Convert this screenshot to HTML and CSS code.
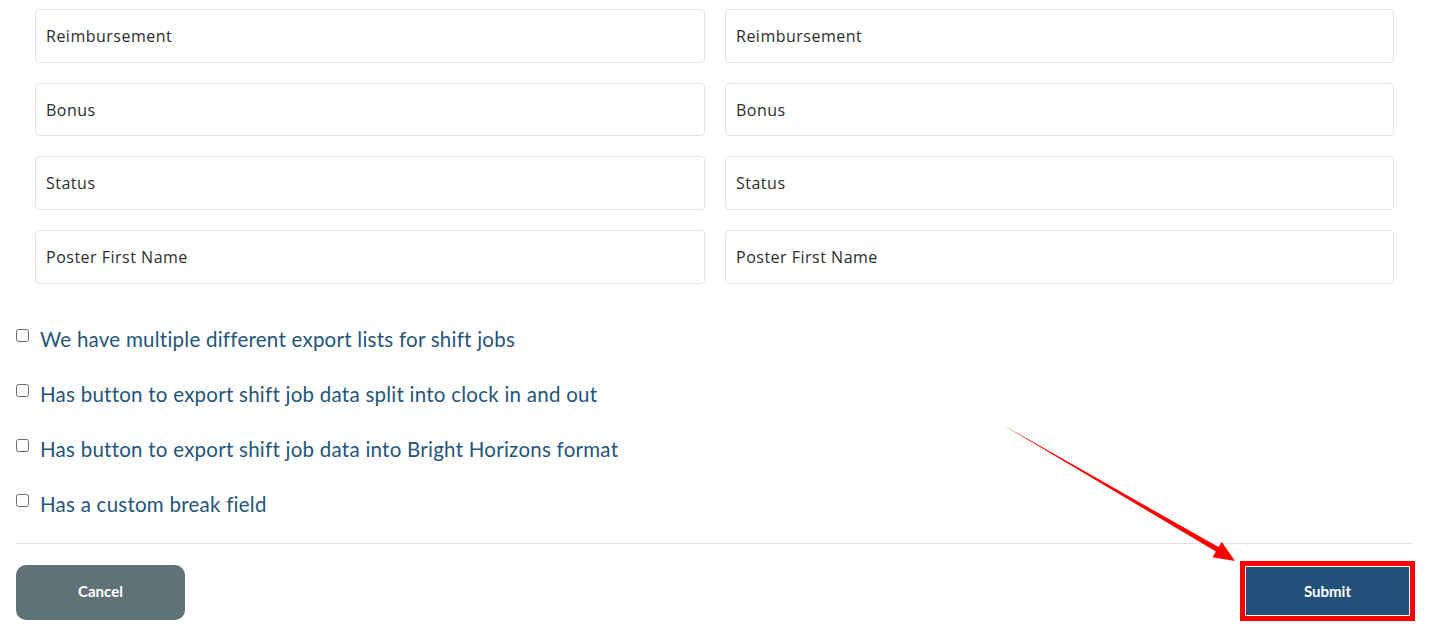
FILE: index.html
```html
<!DOCTYPE html>
<html>
<head>
<meta charset="utf-8">
<link rel="stylesheet" href="styles.css">
</head>
<body>
<div class="page">
  <div class="fields">
    <div class="field">Reimbursement</div>
    <div class="field">Reimbursement</div>
    <div class="field">Bonus</div>
    <div class="field">Bonus</div>
    <div class="field">Status</div>
    <div class="field">Status</div>
    <div class="field">Poster First Name</div>
    <div class="field">Poster First Name</div>
  </div>
  <div class="checks">
    <label class="check"><span class="box"></span>We have multiple different export lists for shift jobs</label>
    <label class="check"><span class="box"></span>Has button to export shift job data split into clock in and out</label>
    <label class="check"><span class="box"></span>Has button to export shift job data into Bright Horizons format</label>
    <label class="check"><span class="box"></span>Has a custom break field</label>
  </div>
  <div class="rule"></div>
  <div class="actions">
    <button class="btn cancel">Cancel</button>
    <div class="highlight"><button class="btn submit">Submit</button></div>
  </div>
</div>
<svg class="arrow" width="1436" height="636" viewBox="0 0 1436 636">
  <polygon fill="#ff0000" points="1003,425 1220.2,548.1 1217.6,552.5"/>
  <polygon fill="#ff0000" points="1235,561 1212.5,557.2 1221.7,541.7"/>
</svg>
</body>
</html>
```
FILE: styles.css
```css
html, body {
  margin: 0;
  padding: 0;
  background: #ffffff;
}
.page {
  width: 1397px;
  margin-left: 16px;
  padding-top: 9px;
}
.fields {
  display: grid;
  grid-template-columns: 670px 669px;
  column-gap: 20px;
  row-gap: 20px;
  padding: 0 19px;
}
.field {
  height: 51.7px;
  border: 1px solid #e3e3e3;
  border-radius: 4px;
  display: flex;
  align-items: center;
  padding-left: 10px;
  font-family: "Open Sans", "Noto Sans", sans-serif;
  font-size: 16px;
  letter-spacing: 0.5px;
  color: #2d2d2d;
  box-sizing: content-box;
}
.checks {
  display: flex;
  flex-direction: column;
  gap: 27px;
  margin-top: 41px;
}
.check {
  display: flex;
  align-items: center;
  height: 28px;
  font-family: "Lato", "Noto Sans", sans-serif;
  font-size: 20.5px;
  letter-spacing: 0.25px;
  color: #24557a;
}
.box {
  width: 11px;
  height: 11px;
  border: 1.5px solid #6b6b6b;
  border-radius: 2.5px;
  margin-right: 11px;
  margin-top: -6px;
  flex: none;
}
.rule {
  height: 1px;
  background: #e2e2e2;
  margin-top: 25px;
}
.actions {
  display: flex;
  justify-content: space-between;
  align-items: center;
  margin-top: 17px;
}
.btn {
  border: none;
  color: #ffffff;
  font-family: "Lato", "Noto Sans", sans-serif;
  font-weight: 700;
  font-size: 15px;
}
.cancel {
  width: 169px;
  height: 55px;
  border-radius: 10px;
  background: #5f7275;
  margin-top: 3px;
  padding-bottom: 3px;
}
.highlight {
  border: 5px solid #ff0000;
  padding: 1px;
  margin-right: -2px;
  display: flex;
}
.submit {
  width: 163px;
  height: 48px;
  background: #234f78;
}
.arrow {
  position: absolute;
  left: 0;
  top: 0;
  pointer-events: none;
}
```
